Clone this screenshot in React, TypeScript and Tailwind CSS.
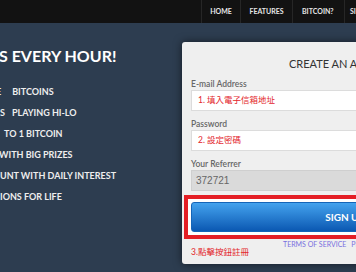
import React from "react";

const lato = { fontFamily: "Lato, 'Noto Sans CJK TC', sans-serif" };

export default function App() {
  return (
    <div className="w-[356px] h-[272px] overflow-hidden bg-[#2d3d50] font-['Lato','Noto_Sans_CJK_TC',sans-serif]">
      {/* nav */}
      <div className="h-[23px] bg-[#121212] flex items-stretch whitespace-nowrap text-[7px] font-bold text-[#e6e6e6]">
        <div className="w-[201px] shrink-0" />
        <div className="w-[39px] shrink-0 border-l border-[#262626] flex items-center justify-center">HOME</div>
        <div className="w-[52px] shrink-0 border-l border-[#262626] flex items-center justify-center">FEATURES</div>
        <div className="w-[52px] shrink-0 border-l border-[#262626] flex items-center pl-[9px]">BITCOIN?</div>
        <div className="w-[40px] shrink-0 border-l border-[#262626] flex items-center pl-[5px]">SIGN UP</div>
      </div>

      <div className="flex items-start">
        {/* left column */}
        <div className="w-[182px] shrink-0 overflow-hidden text-white whitespace-nowrap">
          <div className="mt-[23px] h-[20px] leading-[20px] text-[16px] font-bold -ml-[1px]">S EVERY HOUR!</div>
          <div className="mt-[15px] flex flex-col text-[9px] font-bold text-[#eeeeee] leading-[21px]">
            <div className="flex">
              <span className="-ml-[4px]">E</span>
              <span className="ml-[11px]">BITCOINS</span>
            </div>
            <div className="flex">
              <span className="ml-0">S</span>
              <span className="ml-[7px]">PLAYING HI-LO</span>
            </div>
            <div className="ml-[4px]">TO 1 BITCOIN</div>
            <div className="-ml-[1px]">WITH BIG PRIZES</div>
            <div className="ml-0">UNT WITH DAILY INTEREST</div>
            <div className="ml-0">IONS FOR LIFE</div>
          </div>
        </div>

        {/* card */}
        <div className="mt-[19px] w-[330px] h-[222px] shrink-0 bg-[#efefef] rounded-[3px] shadow-[0_0_8px_rgba(0,0,0,0.55)] flex flex-col">
          <div className="pt-[15px] pl-[107px] h-[29px] leading-[13px] text-[11px] text-[#333] whitespace-nowrap">CREATE AN ACCOUNT</div>

          <div className="pl-[9px] mt-[8px] flex flex-col">
            <div className="h-[10px] leading-[10px] text-[8.5px] font-semibold text-[#666]">E-mail Address</div>
            <div className="mt-[1px] h-[21px] w-[320px] bg-white border border-[#dcdcdc] flex items-center pl-[6px] text-[8.5px] text-[#e3262c]" style={lato}>1. 填入電子信箱地址</div>

            <div className="mt-[8px] h-[10px] leading-[10px] text-[8.5px] font-semibold text-[#666]">Password</div>
            <div className="mt-[1px] h-[21px] w-[320px] bg-white border border-[#dcdcdc] flex items-center pl-[6px] text-[8.5px] text-[#e3262c]" style={lato}>2. 設定密碼</div>

            <div className="mt-[8px] h-[10px] leading-[10px] text-[8.5px] font-semibold text-[#666]">Your Referrer</div>
            <div className="mt-[1px] h-[21px] w-[320px] bg-[#dadada] border border-[#cfcfcf] flex items-center pl-[4px] text-[10px] text-[#666] font-['Liberation_Sans',sans-serif]">372721</div>
          </div>

          <div className="ml-[2px] mt-[4px] w-[330px] h-[44px] border-[4px] border-[#e41e25] bg-white p-[3px]">
            <div className="h-full w-[308px] rounded-[3px] bg-gradient-to-b from-[#44a3ee] to-[#0a58b2] border border-[#1565b8] flex items-center justify-center text-white text-[10px] font-bold">SIGN UP</div>
          </div>

          <div className="mt-[1px] flex items-start whitespace-nowrap">
            <div className="ml-[9px] mt-[6px] w-[92px] leading-[12px] text-[8.5px] text-[#e3262c]">3.點擊按鈕註冊</div>
            <div className="h-[9px] leading-[9px] text-[7px] text-[#7a70e0]">TERMS OF SERVICE</div>
            <div className="ml-[5px] h-[9px] leading-[9px] text-[7px] text-[#7a70e0]">PRIVACY</div>
          </div>
        </div>
      </div>
    </div>
  );
}
